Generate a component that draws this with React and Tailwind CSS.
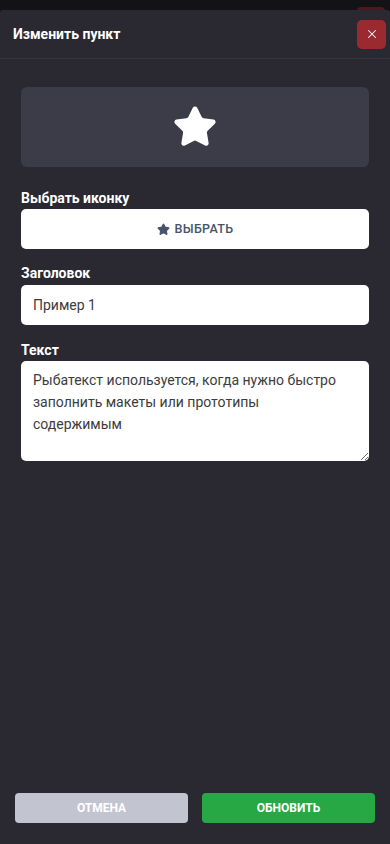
import { Star, X } from 'lucide-react';

export default function App() {
    return (
        <div className="flex flex-col h-[844px] w-[390px] bg-[#131217] overflow-hidden" style={{ fontFamily: 'Roboto, "Noto Sans", sans-serif' }}>
            {/* Полоска страницы под модалкой */}
            <div className="relative h-[10px] flex-shrink-0">
                <div className="absolute right-[5px] top-[7px] h-[10px] w-[28px] rounded bg-[#4a1a1e]" />
            </div>

            <div className="relative flex flex-col flex-1 bg-[#2a2932] rounded-t-[3px]">
                {/* Header */}
                <div className="flex items-center justify-between h-[49px] pl-[13px] pr-[4px] border-b border-[#35343e]">
                    <span className="text-white font-bold text-[14px]">Изменить пункт</span>
                    <button className="h-[29px] w-[29px] rounded-[5px] bg-[#9b2a30] flex items-center justify-center text-white">
                        <X size={14} strokeWidth={1.8} />
                    </button>
                </div>

                {/* Body */}
                <div className="flex flex-col flex-1 px-[21px] pt-[28px]">
                    <div className="h-[80px] rounded-[6px] bg-[#3c3b48] flex items-center justify-center">
                        <Star size={46} fill="white" color="white" strokeWidth={1.5} />
                    </div>

                    <label className="mt-[21px] text-white font-bold text-[14px] leading-[20px]">Выбрать иконку</label>
                    <button className="mt-[1px] h-[40px] rounded-[5px] bg-white flex items-center justify-center gap-[5px] text-[#48536b] text-[12.5px] font-medium tracking-wide">
                        <Star size={13} fill="#48536b" color="#48536b" strokeWidth={2} />
                        ВЫБРАТЬ
                    </button>

                    <label className="mt-[14px] text-white font-bold text-[14px] leading-[20px]">Заголовок</label>
                    <input
                        className="mt-[2px] h-[40px] rounded-[5px] bg-white px-[12px] text-[14px] text-[#3c3c3c] outline-none"
                        defaultValue="Пример 1"
                    />

                    <label className="mt-[15px] text-white font-bold text-[14px] leading-[20px]">Текст</label>
                    <textarea
                        className="mt-[1px] h-[100px] rounded-[5px] bg-white pl-[12px] pr-[26px] py-[8px] text-[14px] leading-[22px] text-[#3c3c3c] outline-none resize-y"
                        defaultValue="Рыбатекст используется, когда нужно быстро заполнить макеты или прототипы содержимым"
                    />
                </div>

                {/* Footer */}
                <div className="flex gap-[14px] px-[15px] pb-[21px]">
                    <button className="flex-1 h-[30px] rounded-[4px] bg-[#c2c4d0] text-white text-[12px] font-bold">ОТМЕНА</button>
                    <button className="flex-1 h-[30px] rounded-[4px] bg-[#28a745] text-white text-[12px] font-bold">ОБНОВИТЬ</button>
                </div>
            </div>
        </div>
    );
}
